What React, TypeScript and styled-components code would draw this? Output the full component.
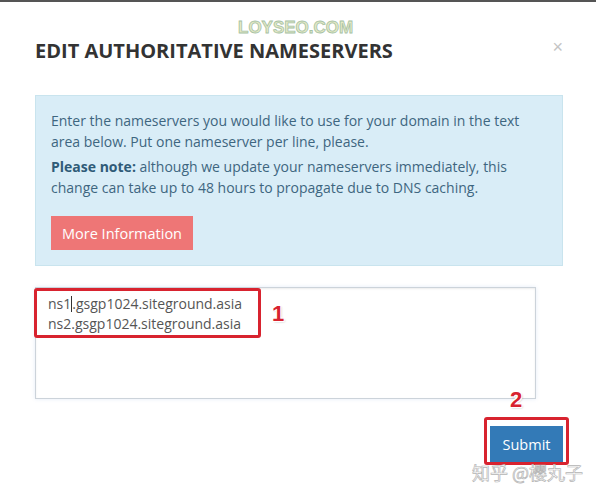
import styled, { createGlobalStyle } from "styled-components";

const GlobalStyle = createGlobalStyle`
  html, body {
    margin: 0;
    padding: 0;
    background: #fff;
  }
  body {
    font-family: "Open Sans", "Liberation Sans", sans-serif;
  }
`;

const TopBar = styled.div`
  height: 2px;
  background: #555;
`;

const Modal = styled.div`
  position: relative;
  width: 596px;
  height: 496px;
  padding: 0 33px 0 35px;
  box-sizing: border-box;
`;

// site watermark stamped over the header
const Watermark = styled.div`
  position: absolute;
  top: 16px;
  left: 238px;
  font-family: "Liberation Sans", Arial, sans-serif;
  font-weight: 700;
  font-size: 17px;
  color: #e6eac4;
  -webkit-text-stroke: 0.8px #a6c2a6;
`;

const Header = styled.div`
  display: flex;
  justify-content: space-between;
  align-items: center;
  padding-top: 36px;
  height: 60px;
  box-sizing: border-box;
`;

const Title = styled.h4`
  margin: 0;
  font-size: 20px;
  font-weight: 700;
  color: #333;
`;

const Close = styled.span`
  font-family: "Liberation Sans", Arial, sans-serif;
  font-size: 18px;
  color: #c4c4c4;
  line-height: 1;
  margin-top: -6px;
`;

const InfoBox = styled.div`
  margin-top: 33px;
  background: #d9edf7;
  border: 1px solid #c9e4ee;
  padding: 14px 15px 15px 15px;
  color: #3e6680;
  font-size: 14px;
  line-height: 21px;
`;

const Para = styled.p`
  margin: 0 0 4px 0;
  strong {
    font-weight: 700;
    color: #2f5b78;
  }
`;

const InfoButton = styled.div`
  display: inline-flex;
  align-items: center;
  margin-top: 14px;
  height: 34px;
  padding: 0 11px;
  background: #ee7676;
  color: #fff;
  font-size: 14.5px;
`;

const FieldWrap = styled.div`
  position: relative;
  margin-top: 21px;
  width: 501px;
`;

const TextArea = styled.div`
  height: 112px;
  border: 1px solid #ccd3da;
  box-shadow: inset 0 1px 2px rgba(0, 0, 0, 0.08), 0 0 4px rgba(80, 130, 200, 0.15);
  padding: 6px 12px;
  box-sizing: border-box;
  color: #555;
  font-size: 14px;
  line-height: 20px;
`;

const Caret = styled.span`
  display: inline-block;
  width: 1px;
  height: 16px;
  background: #333;
  vertical-align: -3px;
`;

// red annotation frames drawn over the form
const Highlight = styled.div<{ $top: number; $left: number; $w: number; $h: number }>`
  position: absolute;
  top: ${(p) => p.$top}px;
  left: ${(p) => p.$left}px;
  width: ${(p) => p.$w}px;
  height: ${(p) => p.$h}px;
  border: 3px solid #d8232f;
  border-radius: 3px;
  box-sizing: border-box;
  pointer-events: none;
`;

const Marker = styled.span<{ $top: number; $left: number }>`
  position: absolute;
  top: ${(p) => p.$top}px;
  left: ${(p) => p.$left}px;
  font-family: "Liberation Sans", Arial, sans-serif;
  font-weight: 700;
  font-size: 22px;
  color: #d8232f;
  text-shadow: 1px 1px 0 #fff, -1px -1px 0 #fff, 1px -1px 0 #fff, -1px 1px 0 #fff,
    1px 1px 2px rgba(0, 0, 0, 0.3);
`;

const Footer = styled.div`
  position: relative;
  display: flex;
  justify-content: flex-end;
  margin-top: 27px;
`;

const SubmitButton = styled.div`
  display: flex;
  align-items: center;
  justify-content: center;
  width: 73px;
  height: 37px;
  background: #337ab7;
  color: #fff;
  font-size: 14.5px;
`;

const Credit = styled.div`
  position: absolute;
  left: 472px;
  top: 457px;
  font-family: "Noto Sans CJK SC", sans-serif;
  font-size: 18px;
  color: #fff;
  -webkit-text-stroke: 0.7px #b4b4b4;
  white-space: nowrap;
`;

export default function App() {
  return (
    <>
      <GlobalStyle />
      <TopBar />
      <Modal>
        <Watermark>LOYSEO.COM</Watermark>
        <Header>
          <Title>EDIT AUTHORITATIVE NAMESERVERS</Title>
          <Close>×</Close>
        </Header>
        <InfoBox>
          <Para>
            Enter the nameservers you would like to use for your domain in the text area below. Put
            one nameserver per line, please.
          </Para>
          <Para>
            <strong>Please note:</strong> although we update your nameservers immediately, this
            change can take up to 48 hours to propagate due to DNS caching.
          </Para>
          <InfoButton>More Information</InfoButton>
        </InfoBox>
        <FieldWrap>
          <TextArea>
            ns1
            <Caret />
            .gsgp1024.siteground.asia
            <br />
            ns2.gsgp1024.siteground.asia
          </TextArea>
          <Highlight $top={1} $left={-1} $w={227} $h={50} />
          <Marker $top={14} $left={237}>1</Marker>
        </FieldWrap>
        <Footer>
          <SubmitButton>Submit</SubmitButton>
          <Highlight $top={-9} $left={449} $w={85} $h={48} />
          <Marker $top={-39} $left={475}>2</Marker>
        </Footer>
        <Credit>知乎 @樱丸子</Credit>
      </Modal>
    </>
  );
}
